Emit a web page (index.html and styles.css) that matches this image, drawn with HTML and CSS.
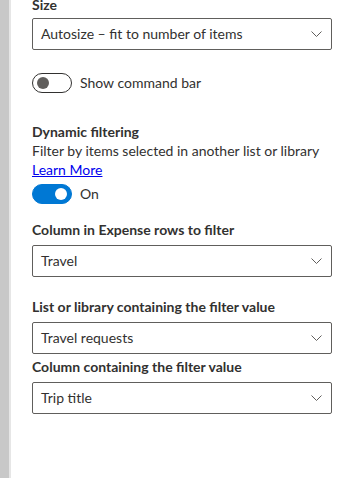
FILE: index.html
```html
<!DOCTYPE html>
<html lang="en">
<head>
    <meta charset="UTF-8">
    <title>Property pane</title>
    <link rel="stylesheet" href="styles.css">
</head>
<body>
    <div class="pane">
        <div class="gutter"></div>
        <div class="content">
            <div class="field">
                <div class="label label-first">Size</div>
                <div class="dropdown">
                    <span class="dropdown-text">Autosize – fit to number of items</span>
                    <svg class="chevron" width="11" height="6" viewBox="0 0 11 6"><path d="M0.5 0.5 L5.5 5.5 L10.5 0.5" fill="none" stroke="#605e5c" stroke-width="1"/></svg>
                </div>
            </div>

            <div class="toggle-row toggle-row-cmd">
                <span class="toggle"><span class="knob"></span></span>
                <span class="toggle-text">Show command bar</span>
            </div>

            <div class="section">
                <div class="section-title">Dynamic filtering</div>
                <div class="section-desc">Filter by items selected in another list or library</div>
                <a class="link" href="#">Learn More</a>
                <div class="toggle-row toggle-row-on">
                    <span class="toggle on"><span class="knob"></span></span>
                    <span class="toggle-text">On</span>
                </div>
            </div>

            <div class="field field-column">
                <div class="label">Column in Expense rows to filter</div>
                <div class="dropdown">
                    <span class="dropdown-text">Travel</span>
                    <svg class="chevron" width="11" height="6" viewBox="0 0 11 6"><path d="M0.5 0.5 L5.5 5.5 L10.5 0.5" fill="none" stroke="#605e5c" stroke-width="1"/></svg>
                </div>
            </div>

            <div class="field field-list">
                <div class="label">List or library containing the filter value</div>
                <div class="dropdown">
                    <span class="dropdown-text">Travel requests</span>
                    <svg class="chevron" width="11" height="6" viewBox="0 0 11 6"><path d="M0.5 0.5 L5.5 5.5 L10.5 0.5" fill="none" stroke="#605e5c" stroke-width="1"/></svg>
                </div>
            </div>

            <div class="field field-value">
                <div class="label">Column containing the filter value</div>
                <div class="dropdown">
                    <span class="dropdown-text">Trip title</span>
                    <svg class="chevron" width="11" height="6" viewBox="0 0 11 6"><path d="M0.5 0.5 L5.5 5.5 L10.5 0.5" fill="none" stroke="#605e5c" stroke-width="1"/></svg>
                </div>
            </div>
        </div>
    </div>
</body>
</html>
```

FILE: styles.css
```css
* {
    margin: 0;
    padding: 0;
    box-sizing: border-box;
    font-family: 'Lato', 'Noto Sans', sans-serif;
}

body {
    background: #ffffff;
    width: 348px;
    height: 478px;
    overflow: hidden;
    color: #323130;
    font-size: 14px;
}

.pane {
    display: flex;
    height: 478px;
}

.gutter {
    width: 11px;
    background: #c8c8c8;
    border-right: 2px solid #e6e6e6;
    flex-shrink: 0;
}

.content {
    flex: 1;
    padding: 0 16px 0 21px;
    display: flex;
    flex-direction: column;
}

.label {
    font-weight: 700;
    line-height: 20px;
    margin-bottom: 5px;
}

.label-first {
    margin-top: -5px;
    margin-bottom: 3px;
}

.dropdown {
    height: 32px;
    border: 1px solid #605e5c;
    border-radius: 2px;
    display: flex;
    align-items: center;
    justify-content: space-between;
    padding: 0 9px 0 8px;
}

.dropdown-text {
    line-height: 20px;
    white-space: nowrap;
}

.chevron {
    display: block;
}

.toggle-row {
    display: flex;
    align-items: center;
    gap: 8px;
}

.toggle-row-cmd {
    margin-top: 23px;
}

.toggle {
    width: 40px;
    height: 20px;
    border: 1px solid #323130;
    border-radius: 10px;
    position: relative;
    display: block;
}

.toggle .knob {
    position: absolute;
    width: 12px;
    height: 12px;
    border-radius: 50%;
    background: #605e5c;
    top: 3px;
    left: 4px;
}

.toggle.on {
    background: #0078d4;
    border-color: #0078d4;
}

.toggle.on .knob {
    background: #ffffff;
    left: 22px;
}

.toggle-text {
    line-height: 20px;
}

.section {
    margin-top: 29px;
    display: flex;
    flex-direction: column;
    align-items: flex-start;
}

.section-title {
    font-weight: 700;
    line-height: 19px;
}

.section-desc {
    line-height: 19px;
    white-space: nowrap;
}

.link {
    line-height: 19px;
    color: #0000ee;
    text-decoration: underline;
}

.toggle-row-on {
    margin-top: 5px;
}

.field-column {
    margin-top: 16px;
}

.field-list {
    margin-top: 20px;
}

.field-value {
    margin-top: 3px;
}
```
